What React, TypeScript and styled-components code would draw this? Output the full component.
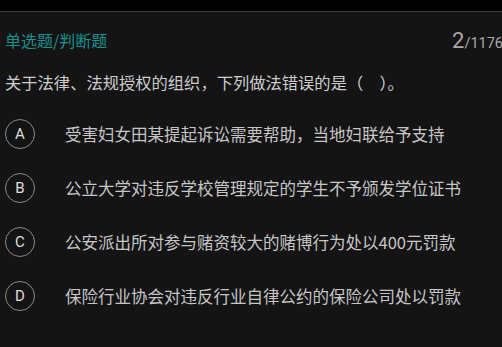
import React from 'react';
import styled, { createGlobalStyle } from 'styled-components';

const GlobalStyle = createGlobalStyle`
    html, body {
        margin: 0;
        padding: 0;
        background: #141414;
        font-family: Roboto, "Noto Sans CJK SC", sans-serif;
    }
`

const Screen = styled.div`
    width: 502px;
    height: 347px;
    overflow: hidden;
    background: #141414;
    display: flex;
    flex-direction: column;
`

const StatusBar = styled.div`
    height: 11px;
    background: #000;
    border-bottom: 1px solid #3c3c3c;
    flex-shrink: 0;
`

const Header = styled.div`
    height: 56px;
    display: flex;
    align-items: center;
    justify-content: space-between;
    padding: 0 0 0 5px;
`

const TypeLabel = styled.span`
    color: #17908e;
    font-size: 16px;
    font-family: "Noto Sans CJK SC", sans-serif;
`

const Counter = styled.span`
    color: #a8a8a8;
    font-family: Roboto, sans-serif;
    font-size: 14.5px;
    margin-right: -1px;
    & b {
        font-weight: 400;
        font-size: 22px;
    }
`

const Question = styled.div`
    height: 28px;
    line-height: 28px;
    padding-left: 5px;
    color: #cdcdcd;
    font-size: 16.3px;
    font-family: "Noto Sans CJK SC", sans-serif;
    white-space: pre;
`

const OptionList = styled.div`
    display: flex;
    flex-direction: column;
    padding-top: 11px;
`

const OptionRow = styled.div`
    height: 54px;
    display: flex;
    align-items: center;
    padding-left: 5px;
`

const Badge = styled.div`
    box-sizing: border-box;
    width: 30px;
    height: 30px;
    border: 1.5px solid #8a8a8a;
    border-radius: 50%;
    display: flex;
    align-items: center;
    justify-content: center;
    color: #dedede;
    font-family: Roboto, sans-serif;
    font-size: 15px;
    flex-shrink: 0;
`

const OptionText = styled.span`
    margin-left: 30px;
    color: #c6c6c6;
    font-size: 16.5px;
    font-family: "Noto Sans CJK SC", sans-serif;
    white-space: nowrap;
`

const options = [
    { key: 'A', text: '受害妇女田某提起诉讼需要帮助，当地妇联给予支持' },
    { key: 'B', text: '公立大学对违反学校管理规定的学生不予颁发学位证书' },
    { key: 'C', text: '公安派出所对参与赌资较大的赌博行为处以400元罚款' },
    { key: 'D', text: '保险行业协会对违反行业自律公约的保险公司处以罚款' },
];

export default function App() {
    return <>
        <GlobalStyle />
        <Screen>
            <StatusBar />
            <Header>
                <TypeLabel>单选题/判断题</TypeLabel>
                <Counter><b>2</b>/1176</Counter>
            </Header>
            <Question>关于法律、法规授权的组织，下列做法错误的是（　）。</Question>
            <OptionList>
                {options.map(o => (
                    <OptionRow key={o.key}>
                        <Badge>{o.key}</Badge>
                        <OptionText>{o.text}</OptionText>
                    </OptionRow>
                ))}
            </OptionList>
        </Screen>
    </>
}
